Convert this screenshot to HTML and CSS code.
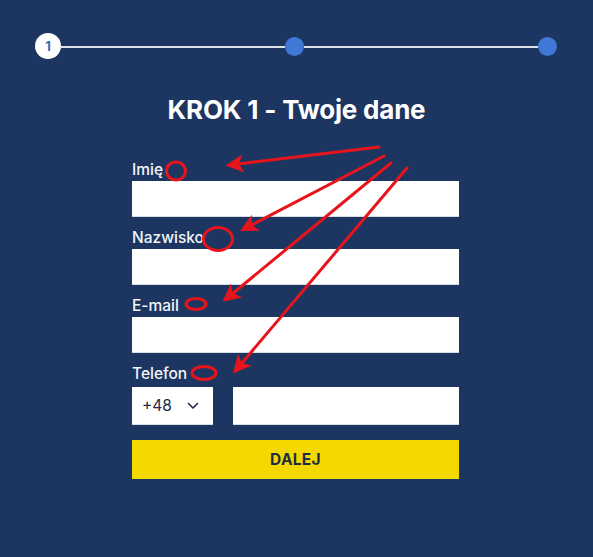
FILE: index.html
```html
<!DOCTYPE html>
<html lang="pl">
<head>
<meta charset="utf-8">
<title>KROK 1 - Twoje dane</title>
<link rel="stylesheet" href="styles.css">
</head>
<body>
<main class="page">
  <div class="stepper">
    <div class="step step-active">1</div>
    <div class="step-line step-line-a"></div>
    <div class="step step-next"></div>
    <div class="step-line step-line-b"></div>
    <div class="step step-next"></div>
  </div>

  <h1 class="title">KROK 1 - Twoje dane</h1>

  <form class="form">
    <div class="field">
      <label class="label" for="f-name">Imię</label>
      <input class="input" id="f-name" type="text">
    </div>
    <div class="field">
      <label class="label" for="f-surname">Nazwisko</label>
      <input class="input" id="f-surname" type="text">
    </div>
    <div class="field">
      <label class="label" for="f-email">E-mail</label>
      <input class="input" id="f-email" type="email">
    </div>
    <div class="field">
      <label class="label" for="f-phone">Telefon</label>
      <div class="phone-row">
        <div class="prefix">
          <span>+48</span>
          <svg class="chevron" width="12" height="8" viewBox="0 0 12 8"><path d="M1.5 1.5 L6 6 L10.5 1.5" fill="none" stroke="#1d2a44" stroke-width="1.6" stroke-linecap="round" stroke-linejoin="round"/></svg>
        </div>
        <input class="input input-phone" id="f-phone" type="tel">
      </div>
    </div>
    <button class="submit" type="button">DALEJ</button>
  </form>

  <svg class="annotations" width="593" height="557" viewBox="0 0 593 557">
    <defs>
      <marker id="head" markerWidth="6" markerHeight="6" refX="4.5" refY="3" orient="auto" markerUnits="strokeWidth">
        <path d="M0 0 L6 3 L0 6 L1.5 3 Z" fill="#e8141c"/>
      </marker>
    </defs>
    <g fill="none" stroke="#e8141c" stroke-width="3" stroke-linecap="round">
      <line x1="379" y1="147" x2="230" y2="165" marker-end="url(#head)"/>
      <line x1="384" y1="156" x2="244" y2="229" marker-end="url(#head)"/>
      <line x1="391" y1="163" x2="226" y2="299" marker-end="url(#head)"/>
      <line x1="407" y1="168" x2="236" y2="370" marker-end="url(#head)"/>
      <ellipse cx="176" cy="171" rx="9.5" ry="9"/>
      <ellipse cx="218" cy="239" rx="14.5" ry="11.5"/>
      <ellipse cx="196" cy="304" rx="10" ry="5.5"/>
      <ellipse cx="204" cy="373" rx="12" ry="6.5"/>
    </g>
  </svg>
</main>
</body>
</html>
```

FILE: styles.css
```css
* { box-sizing: border-box; }

html, body {
  margin: 0;
  padding: 0;
  background: #1c3661;
}

body {
  font-family: "Inter", "Liberation Sans", sans-serif;
  color: #ffffff;
  width: 593px;
  height: 557px;
  overflow: hidden;
}

.page {
  position: relative;
  width: 593px;
  height: 557px;
  padding-top: 33px;
}

.stepper {
  display: flex;
  align-items: center;
  margin-left: 35px;
  margin-right: 36px;
  height: 26px;
}

.step {
  flex: none;
  border-radius: 50%;
}

.step-active {
  width: 26px;
  height: 26px;
  background: #ffffff;
  color: #3b6aae;
  font-size: 13px;
  font-weight: 700;
  display: flex;
  align-items: center;
  justify-content: center;
}

.step-next {
  width: 19px;
  height: 19px;
  background: #3f78d6;
}

.step-line {
  height: 1.5px;
  margin-top: 2px;
  background: #dbe2e8;
  flex-basis: 0;
}

.step-line-a { flex-grow: 224; }
.step-line-b { flex-grow: 234; }

.title {
  margin: 36px 0 0;
  text-align: center;
  font-size: 26px;
  line-height: 30px;
  font-weight: 700;
  letter-spacing: -0.2px;
}

.form {
  width: 327px;
  margin: 35px 0 0 132px;
  display: flex;
  flex-direction: column;
  gap: 11px;
}

.field {
  display: flex;
  flex-direction: column;
  gap: 1px;
}

.label {
  font-size: 15.5px;
  line-height: 20px;
  font-weight: 500;
  color: #f2f4f8;
}

.input {
  display: block;
  width: 100%;
  height: 36px;
  border: 0;
  border-bottom: 1px solid #d7dde4;
  background: #ffffff;
  margin: 0;
  padding: 0 10px;
  font: inherit;
}

.phone-row {
  display: flex;
  gap: 20px;
  margin-top: 2px;
}

.prefix {
  flex: none;
  width: 81px;
  height: 38px;
  background: #ffffff;
  border-bottom: 1px solid #d7dde4;
  display: flex;
  align-items: center;
  padding: 0 14px 0 10px;
  justify-content: space-between;
  color: #1d2a44;
  font-size: 15.5px;
}

.chevron { display: block; }

.input-phone {
  flex: 1;
  height: 38px;
}

.submit {
  margin-top: 4px;
  height: 39px;
  border: 0;
  background: #f5d800;
  color: #1e2c45;
  font-family: inherit;
  font-size: 15.5px;
  font-weight: 700;
  letter-spacing: 0.3px;
  cursor: pointer;
}

.annotations {
  position: absolute;
  left: 0;
  top: 0;
  pointer-events: none;
}
```
